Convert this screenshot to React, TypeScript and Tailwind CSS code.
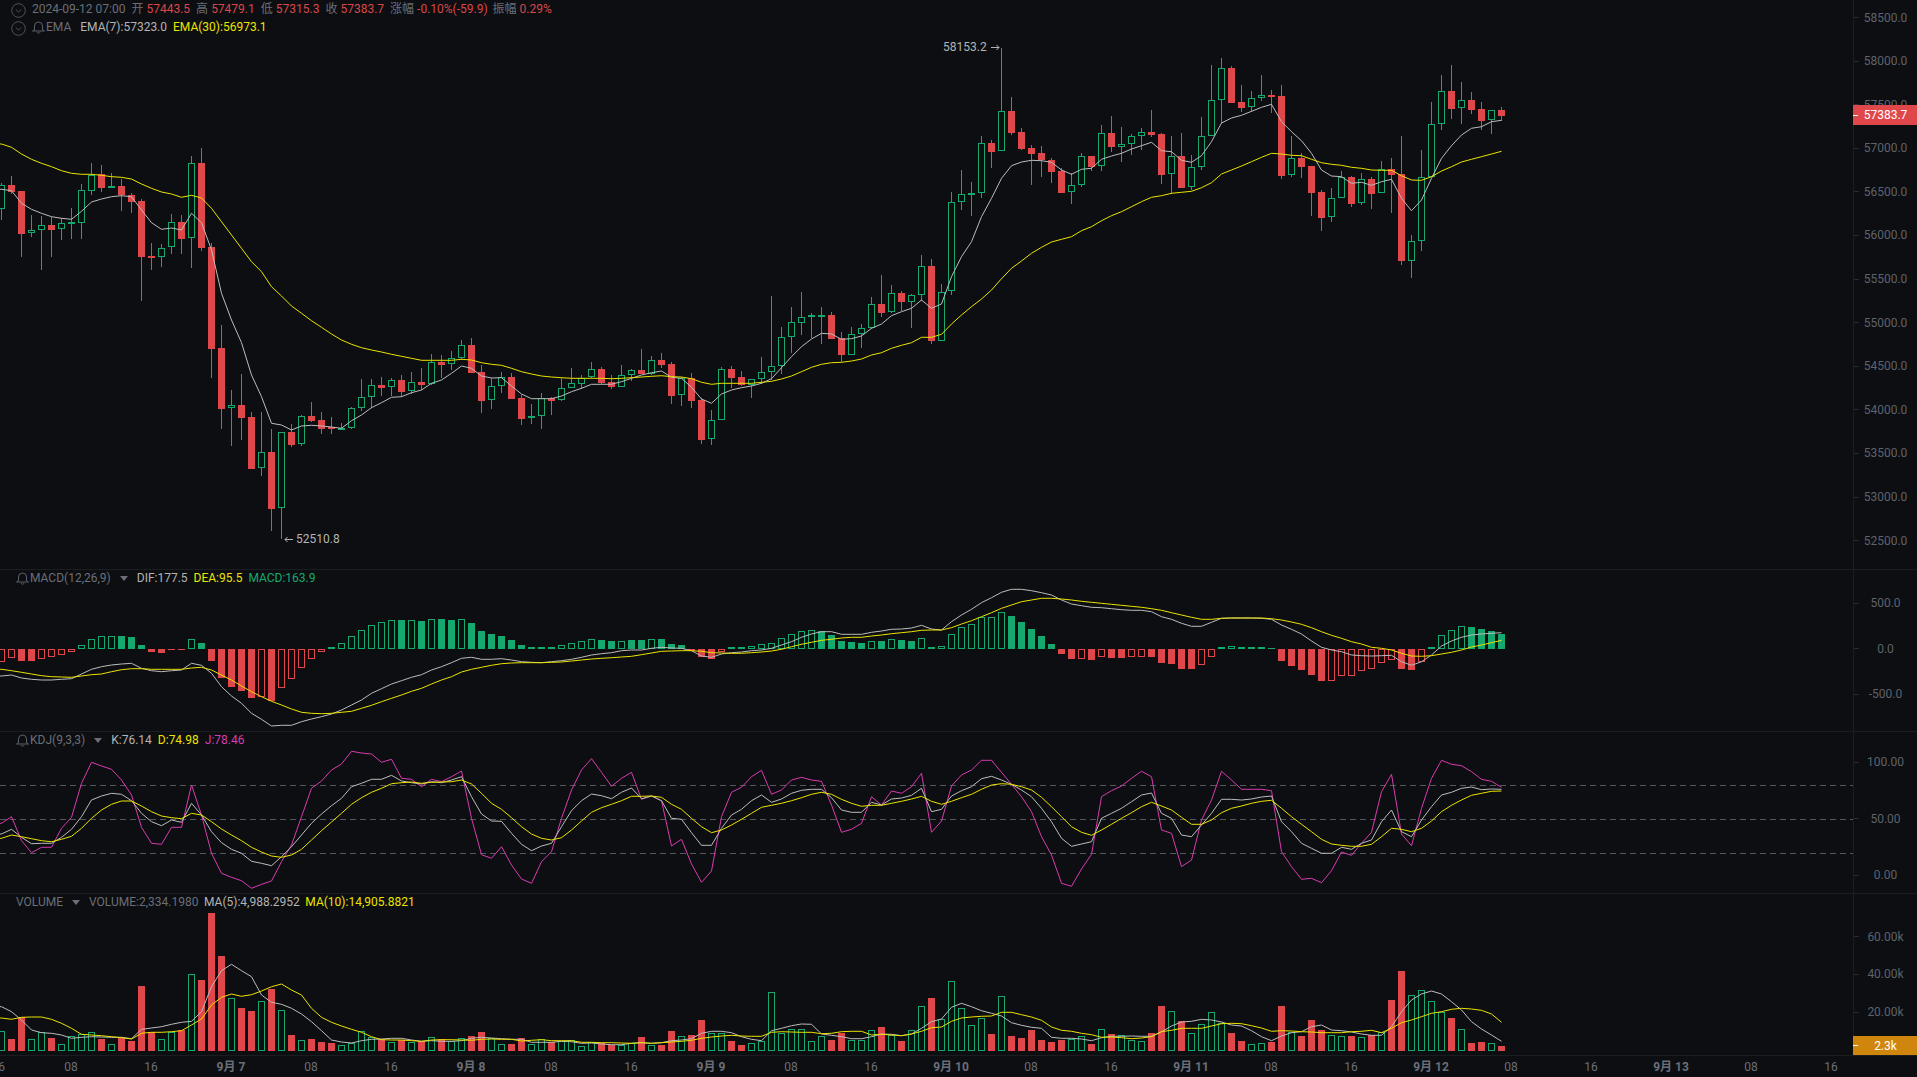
import type { ReactNode } from 'react'

const RED = '#e0474b'
const GREEN = '#16a96f'
const GRAY = '#bcbcbc'
const YELLOW = '#ecE400'
const MAGENTA = '#d93bb0'

// [kind, wickTop, bodyTop, bodyBottom, wickBottom], y values at 3x, kind r = red, g = hollow green, f = solid green
const candles: [string, number, number, number, number][] = [
  ['g',550,555,628,662],['r',527,555,575,580],['r',573,573,701,770],['g',645,691,701,710],['g',647,676,692,810],
  ['r',650,675,690,770],['g',655,670,689,720],['f',625,666,671,718],['g',552,571,670,718],['g',488,524,572,585],
  ['r',495,523,564,575],['f',520,558,564,564],['r',538,558,586,635],['r',580,586,606,640],['r',597,603,770,902],
  ['r',728,768,774,810],['g',732,745,773,800],['g',642,667,743,762],['r',645,666,716,762],['g',468,490,716,803],
  ['r',445,489,743,755],['r',728,741,1046,1132],['r',975,1044,1226,1287],['g',1170,1216,1226,1338],['r',1122,1215,1253,1320],
  ['r',1236,1251,1407,1407],['g',1236,1357,1406,1428],['r',1288,1356,1527,1595],['g',1297,1297,1526,1618],['r',1272,1296,1335,1340],
  ['g',1246,1249,1334,1340],['r',1207,1248,1263,1268],['r',1236,1260,1286,1302],['r',1250,1282,1289,1300],['f',1270,1284,1289,1292],
  ['g',1220,1225,1285,1285],['g',1138,1192,1225,1235],['g',1138,1156,1192,1225],['r',1132,1155,1163,1190],['g',1135,1141,1163,1190],
  ['r',1125,1140,1176,1190],['g',1115,1147,1175,1180],['r',1105,1146,1155,1170],['g',1062,1087,1153,1155],['r',1065,1086,1095,1135],
  ['g',1053,1075,1093,1110],['g',1020,1036,1076,1080],['r',1015,1035,1118,1120],['r',1095,1116,1203,1238],['g',1135,1159,1202,1228],
  ['g',1115,1132,1160,1177],['r',1120,1131,1197,1197],['r',1185,1194,1257,1275],['g',1212,1249,1256,1272],['g',1178,1195,1250,1287],
  ['r',1190,1194,1203,1245],['g',1133,1165,1202,1202],['g',1105,1150,1166,1166],['g',1125,1133,1150,1168],['g',1087,1108,1133,1135],
  ['r',1100,1107,1149,1150],['r',1125,1146,1161,1168],['g',1095,1124,1160,1162],['g',1107,1111,1125,1142],['r',1047,1110,1122,1122],
  ['g',1068,1081,1122,1125],['r',1060,1081,1095,1105],['r',1087,1092,1188,1212],['g',1130,1135,1187,1218],['r',1120,1135,1203,1226],
  ['r',1195,1200,1320,1332],['g',1230,1261,1319,1335],['g',1102,1108,1261,1261],['r',1099,1107,1134,1165],['r',1113,1131,1155,1158],
  ['g',1138,1138,1156,1196],['g',1072,1117,1139,1152],['g',888,1099,1117,1140],['g',982,1012,1099,1122],['g',922,967,1012,1060],
  ['g',877,950,967,1005],['f',940,944,950,1015],['f',920,944,950,1032],['r',937,945,1017,1017],['r',995,1014,1065,1085],
  ['g',982,1003,1065,1065],['g',972,985,1003,1043],['g',890,913,985,985],['r',825,912,939,951],['g',855,880,938,938],
  ['r',872,880,908,932],['g',882,886,907,985],['g',766,799,886,905],['r',778,798,1022,1032],['g',852,875,1022,1022],
  ['g',576,607,875,885],['g',510,583,607,630],['f',545,579,584,648],['g',407,430,580,592],['r',420,429,456,505],
  ['g',145,334,455,455],['r',290,333,400,403],['r',385,396,447,452],['r',435,444,462,555],['r',438,459,481,530],
  ['r',475,480,516,550],['r',505,513,579,579],['g',520,556,578,612],['g',460,469,557,561],['r',468,468,502,513],
  ['g',375,400,500,513],['r',348,399,441,455],['g',380,433,441,485],['g',403,409,434,467],['g',385,397,410,450],
  ['r',330,396,405,412],['r',398,402,525,550],['g',407,469,524,580],['r',398,468,564,564],['g',465,502,563,570],
  ['g',352,409,502,510],['g',195,301,409,409],['g',175,205,301,370],['r',198,204,308,308],['r',255,306,324,336],
  ['g',273,295,323,335],['g',225,286,296,303],['r',270,285,290,340],['r',255,288,527,538],['g',407,475,527,530],
  ['r',460,474,500,536],['r',498,498,578,648],['r',570,576,653,693],['g',565,595,652,668],['g',513,532,595,595],
  ['r',528,531,612,622],['g',518,538,611,614],['r',530,537,582,626],['g',484,508,580,580],['r',473,507,525,638],
  ['r',408,522,783,795],['g',705,724,784,833],['g',449,532,724,753],['g',306,373,532,532],['g',225,274,373,390],
  ['r',195,273,326,356],['g',246,301,326,372],['r',276,300,330,342],['r',306,327,363,390],['g',331,331,362,402],
  ['r',320,330,348,362],
]

const ema7 = [568,572,610,628,640,650,655,658,634,606,597,590,587,590,630,668,688,684,690,640,668,750,880,960,1028,1125,1190,1270,1275,1290,1278,1276,1278,1281,1285,1262,1245,1223,1208,1192,1190,1178,1170,1150,1140,1120,1098,1105,1128,1134,1133,1158,1182,1196,1196,1196,1188,1175,1165,1153,1153,1153,1145,1135,1125,1118,1113,1132,1135,1162,1197,1210,1182,1170,1163,1158,1150,1136,1103,1070,1040,1017,1000,1002,1018,1016,1008,985,972,947,935,925,900,925,912,830,770,725,650,595,535,497,486,481,482,487,510,523,508,505,478,468,460,447,437,427,452,455,481,487,467,425,369,354,346,334,322,313,365,395,422,460,510,528,530,550,547,556,545,538,595,632,600,535,475,437,405,385,380,365,361]
const ema30 = [432,442,462,478,490,500,512,520,523,523,526,530,532,537,552,565,576,582,592,586,594,625,665,705,745,785,815,860,888,918,940,962,982,1002,1020,1033,1043,1050,1056,1063,1069,1075,1081,1081,1081,1081,1078,1080,1088,1093,1096,1105,1115,1122,1128,1131,1133,1135,1135,1135,1135,1136,1135,1133,1131,1129,1127,1130,1131,1136,1147,1153,1150,1150,1150,1150,1147,1144,1137,1128,1115,1102,1093,1088,1087,1083,1077,1065,1058,1045,1036,1028,1012,1012,1003,972,945,920,897,870,836,805,783,760,742,726,718,710,692,680,662,647,635,620,605,592,587,580,577,574,563,548,522,510,498,485,472,460,462,466,467,478,488,493,496,502,505,510,511,511,527,540,541,530,513,500,486,478,470,462,454]

// [kind, top or bottom of the bar], r = red, h = hollow red, f = solid green, g = hollow green
const macdBars: [string, number][] = [
  ['h',307],['h',295],['r',302],['r',302],['h',298],['h',292],['h',286],['h',277],['g',256],['g',238],['g',229],['g',227],['f',228],['f',232],['f',256],['r',275],['r',278],['r',270],['r',270],['g',238],['f',250],
  ['r',303],['r',353],['r',380],['r',393],['r',413],['h',410],['r',423],['h',385],['h',358],['h',323],['h',296],['h',277],['f',262],['g',248],['g',229],['g',211],['g',196],['g',187],['g',181],['f',180],['g',181],
  ['f',183],['g',178],['f',177],['f',180],['g',178],['f',189],['f',214],['f',222],['f',228],['f',240],['f',255],['f',262],['f',262],['f',262],['g',256],['g',250],['g',244],['g',238],['f',240],['f',243],['g',244],['f',241],
  ['f',240],['g',238],['f',238],['f',252],['f',256],['r',272],['r',290],['r',296],['h',277],['f',262],['f',262],['g',259],['g',253],['g',250],['g',235],['g',223],['g',214],['g',211],['f',214],['f',226],['f',244],['f',247],
  ['f',250],['g',244],['f',244],['g',238],['f',241],['f',244],['g',235],['f',262],['g',259],['g',223],['g',202],['g',193],['g',172],['g',170],['g',157],['f',168],['f',186],['f',208],['f',228],['f',253],
  ['r',282],['r',297],['h',296],['r',300],['h',290],['r',293],['r',293],['h',290],['h',290],['r',290],['r',308],['r',312],['r',327],['r',327],['h',314],['h',290],['f',262],['g',259],['f',262],['f',262],['f',262],['f',265],
  ['r',303],['r',318],['r',330],['r',345],['r',363],['h',363],['h',347],['h',347],['h',332],['h',326],['h',308],['h',299],['r',327],['r',330],['h',305],['f',262],['g',226],['g',211],['g',199],['f',202],['f',208],['f',214],['f',223],
]
const dif = [348,345,354,358,360,360,358,356,342,328,320,315,312,310,325,332,335,332,330,310,316,340,380,408,430,460,478,498,496,496,485,477,470,462,450,435,420,400,386,372,362,352,344,330,320,308,295,292,298,298,296,300,305,307,308,305,302,298,292,285,281,278,272,270,270,265,262,264,265,272,288,292,282,278,276,272,270,265,255,245,232,222,215,215,223,223,223,217,213,208,207,204,196,207,210,185,165,148,128,113,97,88,88,92,98,105,120,132,137,142,143,146,149,151,151,155,170,178,190,199,199,187,175,174,174,174,175,178,195,208,222,243,262,270,275,285,287,288,287,286,305,316,305,285,258,243,232,225,222,220,218]
const dea = [328,332,337,342,347,350,351,352,348,344,342,335,329,326,326,328,328,328,328,324,322,330,345,360,378,395,410,424,435,447,457,460,461,460,457,454,445,436,425,415,405,394,385,372,360,350,336,328,322,316,311,309,308,308,308,307,306,303,300,297,295,293,291,289,284,279,274,273,272,272,274,278,279,280,280,278,276,273,268,260,253,247,241,238,234,232,232,228,225,221,218,215,211,210,210,203,192,182,170,158,145,135,125,120,115,115,117,120,124,127,130,133,136,139,142,146,151,158,165,172,178,178,175,174,174,174,174,176,180,186,193,203,215,226,235,245,252,262,265,270,280,288,289,287,282,277,270,261,255,248,241]

const kdjK = [822,808,832,851,850,850,832,808,770,720,708,700,703,722,760,785,797,780,787,730,765,815,848,868,880,904,910,917,890,860,825,790,762,737,715,680,670,658,658,646,663,668,672,665,668,660,650,710,762,783,784,820,853,872,858,850,800,752,722,702,707,716,697,684,716,708,722,775,778,818,856,856,805,765,748,722,705,727,717,700,691,688,688,713,750,757,757,727,735,717,714,706,685,755,748,708,692,680,656,649,660,673,690,710,745,785,835,859,852,845,775,760,745,725,705,699,760,775,825,830,795,760,718,718,720,717,711,708,785,815,850,865,880,880,862,868,850,840,785,750,815,830,780,740,705,697,685,681,689,687,688]
const kdjD = [835,825,830,836,842,845,838,829,805,775,750,733,723,723,738,755,768,773,776,760,765,785,807,825,842,862,876,888,892,885,868,840,812,786,760,733,713,697,685,671,668,666,670,667,666,665,660,672,700,730,748,773,800,822,835,840,833,810,783,757,743,733,722,709,709,708,712,733,748,775,800,818,810,795,778,760,742,736,730,722,713,703,697,703,718,730,739,736,736,730,724,717,709,724,733,724,713,703,688,675,671,673,680,690,712,740,770,800,817,826,810,793,775,758,740,727,738,750,772,793,793,780,758,745,738,730,724,721,745,770,793,815,838,852,856,859,859,853,830,805,808,815,805,783,755,736,720,706,700,694,693]
const kdjJ = [790,770,842,878,862,862,805,772,670,607,618,628,660,705,802,850,853,802,802,675,765,880,940,952,962,985,973,963,905,855,770,685,663,630,612,574,579,582,607,598,655,658,680,658,665,650,633,775,884,895,860,915,957,970,905,875,775,690,630,596,637,679,655,637,718,708,722,858,838,912,967,933,770,697,682,650,631,703,690,660,652,660,664,735,817,808,790,710,735,693,700,680,640,817,783,678,645,630,601,601,637,673,710,755,830,885,970,979,927,883,710,692,678,655,634,650,810,820,920,900,780,720,634,660,688,688,688,692,875,920,958,955,968,932,876,886,850,817,695,643,822,857,745,655,601,613,617,635,658,664,682]

const volBars: [string, number][] = [
  ['g',454],['r',477],['r',412],['g',478],['g',457],['r',474],['g',493],['g',469],['g',463],['g',457],['r',477],['g',493],['r',474],['r',484],['r',318],['r',457],['g',478],['g',455],['r',450],['g',283],['r',300],['r',99],['r',228],['g',355],['r',384],['r',393],['g',364],['r',327],['g',391],['r',465],['g',481],['r',477],['r',486],['r',489],['g',496],['g',490],['g',454],['g',471],['r',477],['g',487],['r',481],['g',487],['r',484],['g',472],['r',478],['g',484],['g',475],['r',468],['r',456],['g',475],['g',493],['r',492],['r',475],['g',493],['g',478],['r',487],['g',484],['g',481],['g',499],['g',487],['r',490],['r',495],['g',495],['g',490],
  ['r',471],['g',496],['r',495],['r',453],['g',469],['r',465],['r',420],['g',460],['g',460],['r',483],['r',495],['g',490],['g',482],['g',337],['g',460],['g',448],['g',448],['g',484],['g',469],['r',480],['r',460],['g',481],['g',481],['g',451],['r',441],['g',466],['r',483],['g',451],['g',379],['r',354],['g',418],['g',304],['g',385],['g',436],['g',415],['r',462],['g',349],['r',468],['r',474],['r',450],['r',480],['r',486],['r',480],['g',477],['g',469],['r',492],['g',448],['r',462],['g',466],['g',481],['g',484],['r',459],['r',378],['g',394],['r',423],['g',460],['g',433],['g',397],['g',430],['r',459],['r',483],['g',493],['g',490],['r',486],['r',378],
  ['g',457],['r',468],['r',420],['r',450],['g',466],['g',469],['r',468],['g',472],['r',466],['g',457],['r',360],['r',273],['g',345],['g',331],['g',364],['g',397],['r',414],['g',448],['r',489],['r',486],['g',490],['r',498],
]
const volMa5 = [380,395,420,450,458,460,465,475,472,470,471,472,472,476,448,444,440,433,427,424,395,320,272,253,272,290,345,367,373,385,402,425,452,480,486,489,482,478,477,475,475,480,484,482,484,484,482,475,472,474,476,478,478,487,487,487,484,485,490,489,492,494,494,490,488,490,488,482,480,476,460,454,454,458,470,478,482,452,445,437,432,433,462,466,470,476,476,470,462,463,467,462,445,425,417,382,370,380,392,400,408,428,436,442,445,472,475,475,477,482,473,469,469,468,469,469,455,438,426,424,418,420,426,435,438,452,470,482,468,458,455,440,435,450,452,456,462,466,466,440,395,360,342,333,342,365,390,425,447,465,484]
const volMa10 = [414,418,412,411,411,418,430,445,463,465,467,470,473,477,460,457,457,455,452,435,417,375,352,342,349,344,333,320,312,330,345,385,412,427,438,448,457,470,479,480,480,482,484,480,479,479,480,481,478,477,478,478,483,481,479,482,482,482,487,487,488,488,489,490,488,490,488,486,484,481,475,471,468,466,468,469,469,457,455,456,457,457,461,460,455,454,454,465,463,465,467,462,454,443,441,424,414,411,409,408,397,397,404,411,421,441,451,454,460,464,472,471,473,476,474,470,455,451,445,445,445,438,431,430,431,437,444,454,452,453,455,456,458,458,458,455,454,451,458,445,428,420,410,400,395,388,385,387,391,402,427]

const priceLabels = ['58500.0','58000.0','57500.0','57000.0','56500.0','56000.0','55500.0','55000.0','54500.0','54000.0','53500.0','53000.0','52500.0']
const timeLabels = ['08','16','9月 7','08','16','9月 8','08','16','9月 9','08','16','9月 10','08','16','9月 11','08','16','9月 12','08','16','9月 13','08','16']

function Line({ values, offset, color }: { values: number[]; offset: number; color: string }) {
  const points = values.map((v, i) => `${1.5 + 10 * i},${(v / 3 + offset).toFixed(1)}`).join(' ')
  return <polyline points={`0,${values[0] / 3 + offset} ${points}`} fill="none" stroke={color} strokeWidth={1} strokeLinejoin="round" />
}

function Bar({ i, from, to, kind }: { i: number; from: number; to: number; kind: string }) {
  const top = Math.round(Math.min(from, to))
  const height = Math.max(Math.round(Math.abs(to - from)), 1)
  const color = kind === 'r' || kind === 'h' ? RED : GREEN
  if (kind === 'g' || kind === 'h') {
    return <rect x={10 * i - 1.5} y={top + 0.5} width={6} height={Math.max(height - 1, 1)} fill="#0c0e11" stroke={color} strokeWidth={1} shapeRendering="crispEdges" />
  }
  return <rect x={10 * i - 2} y={top} width={7} height={height} fill={color} shapeRendering="crispEdges" />
}

function Chart({ height, children }: { height: number; children: ReactNode }) {
  return (
    <svg width={1853} height={height} className="block shrink-0">
      {children}
    </svg>
  )
}

function CircleChevron() {
  return (
    <svg width={15} height={15} viewBox="0 0 15 15" fill="none" stroke="#4f525a" strokeWidth={1} className="shrink-0 translate-y-px">
      <circle cx={7.5} cy={7.5} r={6.8} />
      <path d="M4.8 6.5 7.5 9.2l2.7-2.7" />
    </svg>
  )
}

function BellIcon() {
  return (
    <svg width={13} height={14} viewBox="0 0 13 14" fill="none" stroke="#5d6069" strokeWidth={1} className="shrink-0">
      <path d="M2.5 10V6a4 4 0 0 1 8 0v4" />
      <path d="M.5 11h12L10.5 9.5M.5 11l2-1.5" />
      <path d="M5 12.2a1.6 1.6 0 0 0 3 0" />
    </svg>
  )
}

function Caret() {
  return (
    <svg width={8} height={5} viewBox="0 0 8 5" className="shrink-0">
      <path d="M0 0h8L4 5z" fill="#6b6e78" />
    </svg>
  )
}

function AxisLabel({ text }: { text: string }) {
  return (
    <div className="flex h-[14px] items-center">
      <span className="h-px w-[5px] bg-[#2a2c31]" />
      <span className="flex-1 pr-[5px] text-center">{text}</span>
    </div>
  )
}

function Pane({ axis, children }: { axis: ReactNode; children: ReactNode }) {
  return (
    <div className="relative flex shrink-0 overflow-hidden border-b border-[#1b1d21]">
      {children}
      <div className="relative w-[64px] shrink-0 border-l border-[#1b1d21] text-[#5f626c]">{axis}</div>
    </div>
  )
}

export default function App() {
  return (
    <div className="flex h-[1077px] w-[1917px] flex-col overflow-hidden bg-[#0c0e11] text-[12px] leading-[14px] text-[#6b6e78] [font-family:Roboto,'Noto_Sans_CJK_SC',sans-serif]">
      <Pane
        axis={
          <>
            <div className="flex flex-col gap-[29.6px] pt-[10.5px]">
              {priceLabels.map((label) => (
                <AxisLabel key={label} text={label} />
              ))}
            </div>
            <div className="absolute left-[-1px] top-[105px] flex h-[20px] w-[65px] items-center bg-[#e0474b] text-white">
              <span className="h-px w-[5px] bg-white" />
              <span className="flex-1 pr-[5px] text-center">57383.7</span>
            </div>
          </>
        }
      >
        <Chart height={569}>
          {candles.map(([kind, wickTop, bodyTop, bodyBottom, wickBottom], i) => (
            <g key={i}>
              <rect x={10 * i + 1} y={Math.round(wickTop / 3)} width={1} height={Math.round((wickBottom - wickTop) / 3)} fill={kind === 'r' ? RED : GREEN} shapeRendering="crispEdges" />
              <Bar i={i} from={bodyTop / 3} to={bodyBottom / 3} kind={kind} />
            </g>
          ))}
          <Line values={ema7} offset={0} color={GRAY} />
          <Line values={ema30} offset={0} color={YELLOW} />
        </Chart>
        <div className="absolute left-0 top-[1.5px] flex flex-col gap-[3px]">
          <div className="flex items-center pl-[11px]">
            <CircleChevron />
            <span className="ml-[6px] mr-[6px]">2024-09-12 07:00</span>
            <span>开</span>
            <span className="ml-[3px] mr-[6px] text-[#d9474a]">57443.5</span>
            <span>高</span>
            <span className="ml-[3px] mr-[6px] text-[#d9474a]">57479.1</span>
            <span>低</span>
            <span className="ml-[3px] mr-[6px] text-[#d9474a]">57315.3</span>
            <span>收</span>
            <span className="ml-[3px] mr-[6px] text-[#d9474a]">57383.7</span>
            <span>涨幅</span>
            <span className="ml-[3px] mr-[5px] text-[#d9474a]">-0.10%(-59.9)</span>
            <span>振幅</span>
            <span className="ml-[3px] text-[#d9474a]">0.29%</span>
          </div>
          <div className="flex items-center pl-[11px]">
            <CircleChevron />
            <span className="ml-[6px]"><BellIcon /></span>
            <span className="ml-px mr-[9px]">EMA</span>
            <span className="mr-[6px] text-[#b4b4b4]">EMA(7):57323.0</span>
            <span className="text-[#ece400]">EMA(30):56973.1</span>
          </div>
        </div>
        <div className="absolute left-[284px] top-[532px] flex items-center gap-[3px] text-[#b4b4b4]">
          <svg width={9} height={7} viewBox="0 0 9 7" fill="none" stroke="#b4b4b4" strokeWidth={1}>
            <path d="M9 3.5H1M3.5 1 1 3.5 3.5 6" />
          </svg>
          52510.8
        </div>
        <div className="absolute left-[943px] top-[40px] flex items-center gap-[4px] text-[#b4b4b4]">
          58153.2
          <svg width={9} height={7} viewBox="0 0 9 7" fill="none" stroke="#b4b4b4" strokeWidth={1}>
            <path d="M0 3.5h8M5.5 1 8 3.5 5.5 6" />
          </svg>
        </div>
      </Pane>

      <Pane
        axis={
          <div className="flex flex-col gap-[31.5px] pt-[26px]">
            <AxisLabel text="500.0" />
            <AxisLabel text="0.0" />
            <AxisLabel text="-500.0" />
          </div>
        }
      >
        <Chart height={161}>
          {macdBars.map(([kind, value], i) => (
            <Bar key={i} i={i} from={79} to={value / 3 - 10} kind={kind} />
          ))}
          <Line values={dif} offset={-10} color={GRAY} />
          <Line values={dea} offset={-10} color={YELLOW} />
        </Chart>
        <div className="absolute left-[16px] top-[1px] flex items-center">
          <BellIcon />
          <span className="ml-px mr-[9px]">MACD(12,26,9)</span>
          <Caret />
          <span className="ml-[9px] mr-[6px] text-[#b4b4b4]">DIF:177.5</span>
          <span className="mr-[6px] text-[#ece400]">DEA:95.5</span>
          <span className="text-[#16a96f]">MACD:163.9</span>
        </div>
      </Pane>

      <Pane
        axis={
          <div className="flex flex-col gap-[42.5px] pt-[23px]">
            <AxisLabel text="100.00" />
            <AxisLabel text="50.00" />
            <AxisLabel text="0.00" />
          </div>
        }
      >
        <Chart height={161}>
          <line x1={0} x2={1853} y1={53.5} y2={53.5} stroke="#55575c" strokeDasharray="6 4" />
          <line x1={0} x2={1853} y1={87.5} y2={87.5} stroke="#55575c" strokeDasharray="6 4" />
          <line x1={0} x2={1853} y1={121.5} y2={121.5} stroke="#55575c" strokeDasharray="6 4" />
          <Line values={kdjJ} offset={-172} color={MAGENTA} />
          <Line values={kdjK} offset={-172} color={GRAY} />
          <Line values={kdjD} offset={-172} color={YELLOW} />
        </Chart>
        <div className="absolute left-[16px] top-[1px] flex items-center">
          <BellIcon />
          <span className="ml-px mr-[9px]">KDJ(9,3,3)</span>
          <Caret />
          <span className="ml-[9px] mr-[6px] text-[#b4b4b4]">K:76.14</span>
          <span className="mr-[6px] text-[#ece400]">D:74.98</span>
          <span className="text-[#d93bb0]">J:78.46</span>
        </div>
      </Pane>

      <Pane
        axis={
          <>
            <div className="flex flex-col gap-[23.7px] pt-[35.7px]">
              <AxisLabel text="60.00k" />
              <AxisLabel text="40.00k" />
              <AxisLabel text="20.00k" />
            </div>
            <div className="absolute bottom-0 left-[-1px] flex h-[19px] w-[65px] items-center bg-[#d0860c] text-white">
              <span className="h-px w-[5px] bg-white" />
              <span className="flex-1 pr-[5px] text-center">2.3k</span>
            </div>
          </>
        }
      >
        <Chart height={161}>
          {volBars.map(([kind, value], i) => (
            <Bar key={i} i={i} from={157} to={value / 3 - 14} kind={kind} />
          ))}
          <Line values={volMa5} offset={-14} color={GRAY} />
          <Line values={volMa10} offset={-14} color={YELLOW} />
        </Chart>
        <div className="absolute left-[16px] top-[1px] flex items-center">
          <span className="mr-[9px]">VOLUME</span>
          <Caret />
          <span className="ml-[9px] mr-[5.5px]">VOLUME:2,334.1980</span>
          <span className="mr-[5.5px] text-[#b4b4b4]">MA(5):4,988.2952</span>
          <span className="text-[#ece400]">MA(10):14,905.8821</span>
        </div>
      </Pane>

      <div className="flex flex-1 items-center overflow-hidden">
        <div className="ml-[-34.5px] flex shrink-0">
          <span className="w-[65.5px] text-center">16</span>
          {timeLabels.map((label, i) => (
            <span key={i} className={label.includes('月') ? 'w-[80px] text-center font-bold' : 'w-[80px] text-center'}>
              {label}
            </span>
          ))}
        </div>
      </div>
    </div>
  )
}
